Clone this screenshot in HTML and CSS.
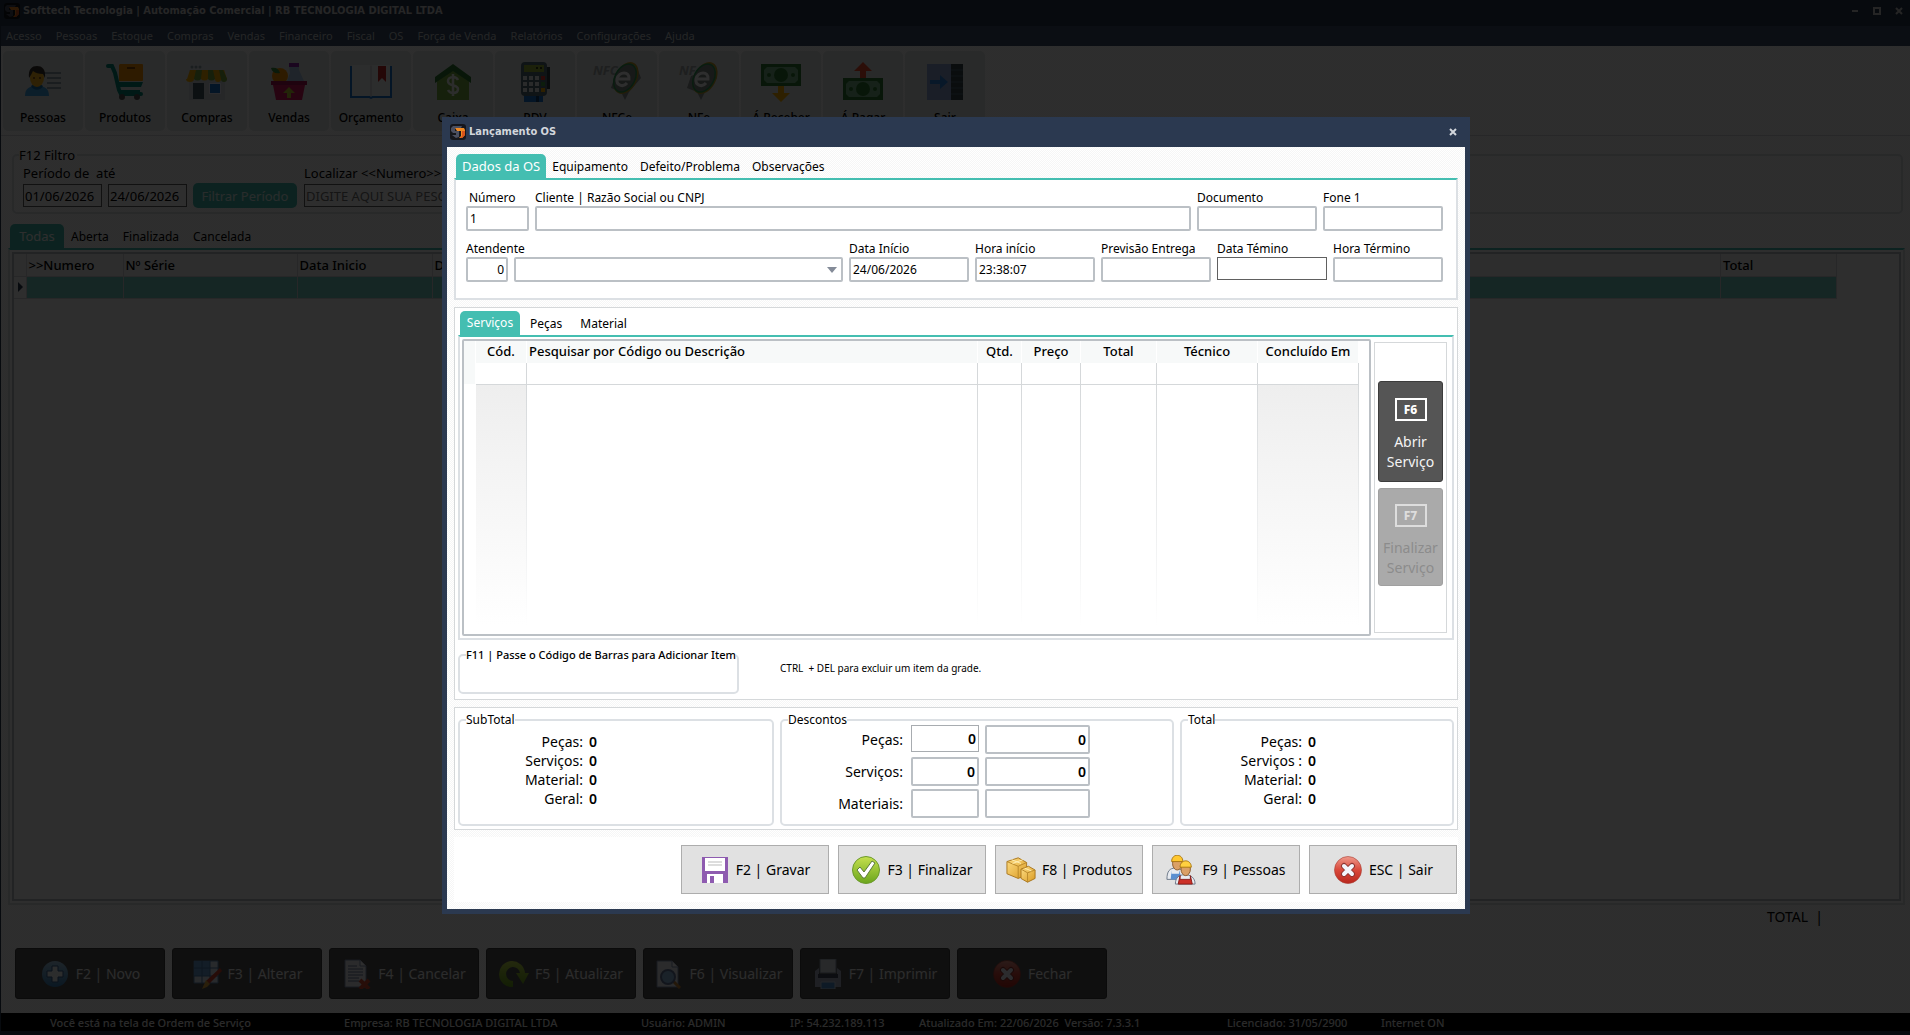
FILE: index.html
```html
<!DOCTYPE html>
<html lang="pt-BR">
<head>
<meta charset="UTF-8">
<meta name="viewport" content="width=device-width, initial-scale=1.0">
<title>Softtech Tecnologia | Automação Comercial</title>
<link rel="stylesheet" href="styles.css">
</head>
<body>
<svg class="defs" width="0" height="0">
    <defs>
        <linearGradient id="gGreen" x1="0" y1="0" x2="0" y2="1"><stop offset="0" stop-color="#c6e04e"/><stop offset="1" stop-color="#6aa51c"/></linearGradient>
        <linearGradient id="gRed" x1="0" y1="0" x2="0" y2="1"><stop offset="0" stop-color="#ef9a8c"/><stop offset="0.5" stop-color="#d9483a"/><stop offset="1" stop-color="#b8261c"/></linearGradient>
        <linearGradient id="gBlue" x1="0" y1="0" x2="0" y2="1"><stop offset="0" stop-color="#a4cbe6"/><stop offset="1" stop-color="#3c84bd"/></linearGradient>
        <linearGradient id="gGold" x1="0" y1="0" x2="1" y2="1"><stop offset="0" stop-color="#ffdf86"/><stop offset="1" stop-color="#d99a22"/></linearGradient>
        <symbol id="logo" viewBox="0 0 16 16">
            <rect width="16" height="16" rx="3" fill="#15161c"/>
            <path d="M3 2h9l-1 2H5v3h4v6l-3 1-4-3h4V9H3L1 7V4z" fill="#4b4f60"/>
            <path d="M5 4h9l1 2v5l-3 3h-3l2-2V7H7z" fill="#f08a24"/>
            <path d="M12 7h3v4l-3 3h-2l2-2z" fill="#d8541c"/>
        </symbol>
        <symbol id="close" viewBox="0 0 30 30">
            <circle cx="15" cy="15" r="13.500" fill="url(#gRed)" stroke="#a83a30" stroke-width="0.6"/>
            <path d="M11 11l8 8M19 11l-8 8" stroke="#8d3431" stroke-width="6" stroke-linecap="round"/>
            <path d="M11 11l8 8M19 11l-8 8" stroke="#f3f5fb" stroke-width="4" stroke-linecap="round"/>
        </symbol>
    </defs>
</svg>

<div class="app">
    <header class="titlebar">
        <svg class="logo"><use href="#logo"/></svg>
        <h1>Softtech Tecnologia | Automação Comercial | RB TECNOLOGIA DIGITAL LTDA</h1>
        <div class="winbuttons">
            <button aria-label="Minimizar"><svg viewBox="0 0 8 8"><path d="M1 4h6" stroke="#ccc" stroke-width="2"/></svg></button>
            <button aria-label="Maximizar"><svg viewBox="0 0 8 8"><path d="M1 1h6v6h-6z" fill="none" stroke="#ccc" stroke-width="2"/></svg></button>
            <button aria-label="Fechar janela"><svg viewBox="0 0 8 8"><path d="M1 1l6 6M7 1l-6 6" stroke="#ccc" stroke-width="2"/></svg></button>
        </div>
    </header>
    <nav class="menu">
        <a href="#">Acesso</a><a href="#">Pessoas</a><a href="#">Estoque</a><a href="#">Compras</a><a href="#">Vendas</a><a href="#">Financeiro</a><a href="#">Fiscal</a><a href="#">OS</a><a href="#">Força de Venda</a><a href="#">Relatórios</a><a href="#">Configurações</a><a href="#">Ajuda</a>
    </nav>

    <div class="toolbar">
        <button class="tool">
            <svg viewBox="0 0 40 40"><path d="M20 11h18M24 16h14M24 21h14M24 26h14" stroke="#78859a" stroke-width="1.500"/><path d="M2 34c0-8 5-10 12-10s12 2 12 10z" fill="#3fa4e8"/><path d="M8 24c2 5 10 5 12 0l-3-2h-6z" fill="#1976b2"/><ellipse cx="14" cy="16" rx="7" ry="9" fill="#ffb81c"/><path d="M6 16c-1-9 3-12 8-12s9 3 8 12l-2-4c-4 0-8-1-10-3-1 2-2 4-4 7z" fill="#3a3330"/><circle cx="11" cy="16" r="1" fill="#704214"/><circle cx="17" cy="16" r="1" fill="#704214"/></svg>
            Pessoas
        </button>
        <button class="tool">
            <svg viewBox="0 0 40 40"><path d="M15 2h22a1 1 0 0 1 1 1v15a1 1 0 0 1-1 1H14V3z" fill="#ff9800"/><path d="M22 5h8v2h-8z" fill="#8a4b00"/><path d="M3 4h4l3 7 4 17 2 4h20" fill="none" stroke="#00897b" stroke-width="4" stroke-linecap="round"/><path d="M13 20h25l-2 5H14zM15 28h20v2H16z" fill="#00897b"/><circle cx="17" cy="35" r="3" fill="#555"/><circle cx="32" cy="35" r="3" fill="#555"/></svg>
            Produtos
        </button>
        <button class="tool">
            <svg viewBox="0 0 40 40"><path d="M2 2h36v36H2z" fill="#cfd8dc"/><path d="M2 2h36v6H2z" fill="#e4e9ec"/><circle cx="5" cy="5" r="1.500" fill="#90a4ae"/><circle cx="9" cy="5" r="1.500" fill="#90a4ae"/><circle cx="13" cy="5" r="1.500" fill="#90a4ae"/><path d="M3 8h34l3 9H0z" fill="#ffb300"/><path d="M9 8h6l-1 9H7zM21 8h5l2 9h-7zM32 8h4l4 9h-6z" fill="#7aa93c"/><path d="M-1 17h8a4 3 0 0 1-8 0M14 17h7a4 3 0 0 1-7 0M28 17h6a3 3 0 0 1-6 0" fill="#ffb300"/><path d="M7 17h7a4 3 0 0 1-7 0M21 17h7a4 3 0 0 1-7 0M34 17h6a3 3 0 0 1-6 0" fill="#7aa93c"/><path d="M6 21h11v16H6z" fill="#455a64"/><path d="M22 21h12v11H22z" fill="#eef"/><path d="M23 22h10v9H23z" fill="#1976d2"/></svg>
            Compras
        </button>
        <button class="tool">
            <svg viewBox="0 0 40 40"><circle cx="11" cy="14" r="8" fill="#ff9800"/><path d="M2 6c5-1 8 1 9 5-5 1-8-1-9-5z" fill="#388e3c"/><path d="M20 3h10v5l5 11H18l3-8z" fill="#a9c6e8"/><path d="M20 1h10v4H20z" fill="#8e24aa"/><path d="M4 23h32l-3 15H7z" fill="#d81b60"/><path d="M2 19h36v4H2z" fill="#ad1457"/><path d="M20 25l6 6h-4v5h-4v-5h-4z" fill="#c0ca33"/></svg>
            Vendas
        </button>
        <button class="tool">
            <svg class="wide" viewBox="0 0 44 40"><path d="M1 4h42v32H24l-2 1-2-1H1z" fill="#1976d2"/><path d="M3 3h18l1 1 1-1h18v31H23l-1 1-1-1H3z" fill="#f4f6f8"/><path d="M22 4v30" stroke="#c0c8cc"/><path d="M29 4h8v16l-4-4-4 4z" fill="#c62828"/></svg>
            Orçamento
        </button>
        <button class="tool">
            <svg viewBox="0 0 40 40"><path d="M4 16L20 5l16 11v22H4z" fill="#7cb342"/><path d="M20 2L38 15v6L20 9 2 21v-6z" fill="#2e7d32"/><path d="M25 18c-1-2-3-3-5-3-3 0-5 2-5 4 0 6 10 3 10 8 0 3-2 4-5 4-2 0-4-1-5-3M20 12v22" fill="none" stroke="#f4f6f0" stroke-width="2.500"/></svg>
            Caixa
        </button>
        <button class="tool">
            <svg viewBox="0 0 40 40"><path d="M31 5h4v22h-4z" fill="#2c3e46"/><path d="M9 31h19v9H9z" fill="#1976d2"/><path d="M21 33h3v7h-3z" fill="#0d3c70"/><rect x="6" width="26" height="34" rx="4" fill="#546e7a"/><path d="M9 3h20v7H9z" fill="#9ab83a"/><path d="M21 5h2v2h-2zM25 5h2v2h-2z" fill="#33401a"/><path d="M8 14h4v4H8zM14 14h4v4h-4zM20 14h4v4h-4zM8 20h4v4H8zM14 20h4v4h-4zM20 20h4v4h-4zM8 26h4v4H8zM14 26h4v4h-4zM20 26h4v4h-4z" fill="#e8ecee"/><path d="M26 14h4v4h-4z" fill="#e53935"/><path d="M26 20h4v4h-4z" fill="#43a047"/><path d="M26 26h4v4h-4z" fill="#ffb300"/></svg>
            PDV
        </button>
        <button class="tool">
            <svg class="wide" viewBox="0 0 44 40"><path d="M20 14l22-8 4 10-12 14-4 8-4-8-10-4z" fill="#8f9595"/><text x="-2" y="13" class="nf">NFC</text><ellipse cx="31" cy="16" rx="10" ry="16" transform="rotate(28 31 16)" fill="none" stroke="#c9a227" stroke-width="2"/><ellipse cx="30" cy="16" rx="10" ry="15" transform="rotate(28 30 16)" fill="#7f8a84" stroke="#2f9e5a" stroke-width="1.500"/><path d="M22 17h12c1-8-10-8-12 0-1 6 6 9 10 4" fill="none" stroke="#fff" stroke-width="3"/></svg>
            NFCe
        </button>
        <button class="tool">
            <svg class="wide" viewBox="0 0 44 40"><path d="M14 14l22-8 4 10-12 14-4 8-4-8-10-4z" fill="#8f9595"/><text x="2" y="13" class="nf">NF</text><ellipse cx="28" cy="16" rx="10" ry="16" transform="rotate(28 28 16)" fill="none" stroke="#c9a227" stroke-width="2"/><ellipse cx="27" cy="16" rx="10" ry="15" transform="rotate(28 27 16)" fill="#7f8a84" stroke="#2f9e5a" stroke-width="1.500"/><path d="M19 17h12c1-8-10-8-12 0-1 6 6 9 10 4" fill="none" stroke="#fff" stroke-width="3"/></svg>
            NFe
        </button>
        <button class="tool">
            <svg viewBox="0 0 40 40"><path d="M0 2h40v22H0z" fill="#2e7d32"/><path d="M6 5h28l3 3v10l-3 3H6l-3-3V8z" fill="#7cb98a"/><circle cx="20" cy="13" r="7" fill="#2e7d32"/><circle cx="8" cy="13" r="2" fill="#2e7d32"/><circle cx="32" cy="13" r="2" fill="#2e7d32"/><path d="M17 24h6v7h6l-9 9-9-9h6z" fill="#ffb300"/></svg>
            Á Receber
        </button>
        <button class="tool">
            <svg viewBox="0 0 40 40"><path d="M0 16h40v22H0z" fill="#2e7d32"/><path d="M6 19h28l3 3v10l-3 3H6l-3-3V22z" fill="#7cb98a"/><circle cx="20" cy="27" r="7" fill="#2e7d32"/><circle cx="8" cy="27" r="2" fill="#2e7d32"/><circle cx="32" cy="27" r="2" fill="#2e7d32"/><path d="M17 16h6V9h6l-9-9-9 9h6z" fill="#f4512c"/></svg>
            Á Pagar
        </button>
        <button class="tool">
            <svg viewBox="0 0 40 40"><path d="M2 2h24v36H2z" fill="#90a8d8"/><path d="M26 2h12v36H26z" fill="#37474f"/><path d="M26 8h12M26 14h12M26 20h12M26 26h12M26 32h12" stroke="#546e7a"/><path d="M5 18h10v-5l8 7-8 7v-5H5z" fill="#2f86e0"/></svg>
            Sair
        </button>
    </div>

    <main class="main">
        <fieldset class="filter">
            <legend>F12 Filtro</legend>
            <div class="period">
                <label for="dtIni">Período de&nbsp; até</label>
                <div class="period-row">
                    <input id="dtIni" value="01/06/2026">
                    <input aria-label="Data final" value="24/06/2026">
                    <button class="btn-filter">Filtrar Período</button>
                </div>
            </div>
            <div class="search">
                <label for="search">Localizar &lt;&lt;Numero&gt;&gt;</label>
                <input id="search" placeholder="DIGITE AQUI SUA PESQUISA">
            </div>
        </fieldset>

        <div class="tabs tabs-main">
            <button class="tab active">Todas</button>
            <button class="tab">Aberta</button>
            <button class="tab">Finalizada</button>
            <button class="tab">Cancelada</button>
        </div>
        <div class="list-panel">
            <div class="list-box">
                <table class="list">
                    <colgroup><col class="w-mark"><col class="w-num"><col class="w-serie"><col class="w-date"><col><col class="w-sum"></colgroup>
                    <thead>
                        <tr><th></th><th>&gt;&gt;Numero</th><th>Nº Série</th><th>Data Inicio</th><th>Data Término</th><th>Total</th></tr>
                    </thead>
                    <tbody>
                        <tr><td class="mark"></td><td></td><td></td><td></td><td></td><td></td></tr>
                    </tbody>
                </table>
            </div>
        </div>
        <div class="total-line">TOTAL&nbsp; |</div>
        <div class="actions">
            <button class="action"><svg viewBox="0 0 30 30"><circle cx="15" cy="15" r="13" fill="url(#gBlue)"/><path d="M12 7h6v5h5v6h-5v5h-6v-5H7v-6h5z" fill="#f4f6fa" stroke="#3a6090"/></svg>F2 | Novo</button>
            <button class="action"><svg viewBox="0 0 30 30"><path d="M2 2h24v22H2z" fill="#dfe9f2" stroke="#5c86b4"/><path d="M2 2h16v15H2z" fill="#6ba3d6"/><path d="M2 9h24M2 17h24M10 2v22M18 2v22" stroke="#4c79ab"/><path d="M28 9l2 3-13 13-3-3z" fill="#d8432e"/><path d="M14 21l4 4-3 3-5 2z" fill="#eaa93c"/></svg>F3 | Alterar</button>
            <button class="action"><svg viewBox="0 0 30 30"><path d="M3 1h15l6 6v21H3z" fill="#eceff4" stroke="#8490b0"/><path d="M18 1v6h6" fill="#fff" stroke="#8490b0"/><path d="M6 7h9M6 10h15M6 13h15M6 16h15M6 19h11M6 22h11" stroke="#6b7899"/><path d="M18 21l9 9M27 21l-9 9" stroke="#d9482c" stroke-width="4"/></svg>F4 | Cancelar</button>
            <button class="action"><svg viewBox="0 0 30 30"><path d="M14 28a13 13 0 1 1 12-14h4l-6 11-7-11h4a7 7 0 1 0-7 8z" fill="url(#gGreen)"/></svg>F5 | Atualizar</button>
            <button class="action"><svg viewBox="0 0 30 30"><path d="M3 2h15l6 6v20H3z" fill="#eceff4" stroke="#8490b0"/><path d="M18 2v6h6" fill="#fff" stroke="#8490b0"/><path d="M19 22l7 7" stroke="#c98335" stroke-width="3"/><circle cx="14" cy="18" r="7" fill="#8fbbe4" stroke="#66779b" stroke-width="2"/></svg>F6 | Visualizar</button>
            <button class="action"><svg viewBox="0 0 30 30"><path d="M7 0h16v14H7z" fill="#dce0e6" stroke="#8a93a6"/><path d="M2 12l4-3v7h18V9l4 3v16H2z" fill="#a9b2c8"/><path d="M5 15h20v4H5z" fill="#424b60"/><path d="M8 23h14v7H8z" fill="#4f93cf" stroke="#c7d3e2"/></svg>F7 | Imprimir</button>
            <button class="action"><svg viewBox="0 0 30 30"><use href="#close"/></svg>Fechar</button>
        </div>
    </main>

    <footer class="status">
        <span class="s1">Você está na tela de Ordem de Serviço</span>
        <span class="s2">Empresa: RB TECNOLOGIA DIGITAL LTDA</span>
        <span class="s3">Usuário: ADMIN</span>
        <span class="s4">IP: 54.232.189.113</span>
        <span class="s5">Atualizado Em: 22/06/2026&nbsp; Versão: 7.3.3.1</span>
        <span class="s6">Licenciado: 31/05/2900</span>
        <span>Internet ON</span>
    </footer>
</div>

<div class="overlay">
    <div class="dialog" role="dialog" aria-labelledby="dlgTitle">
        <div class="dialog-title">
            <svg class="logo"><use href="#logo"/></svg>
            <h2 id="dlgTitle">Lançamento OS</h2>
            <button class="dialog-close" aria-label="Fechar"><svg viewBox="0 0 8 8"><path d="M1 1l6 6M7 1l-6 6" stroke="#d2d6dc" stroke-width="2"/></svg></button>
        </div>
        <div class="dialog-body">
            <div class="tabs">
                <button class="tab active">Dados da OS</button>
                <button class="tab">Equipamento</button>
                <button class="tab">Defeito/Problema</button>
                <button class="tab">Observações</button>
            </div>
            <div class="os-data">
                <div class="field-row">
                    <div class="field f-num"><label class="indent" for="numero">Número</label><input id="numero" value="1"></div>
                    <div class="field grow"><label for="cliente">Cliente | Razão Social ou CNPJ</label><input id="cliente"></div>
                    <div class="field f-md"><label for="doc">Documento</label><input id="doc"></div>
                    <div class="field f-md"><label for="fone">Fone 1</label><input id="fone"></div>
                </div>
                <div class="field-row">
                    <div class="field grow">
                        <label for="atend">Atendente</label>
                        <div class="pair">
                            <input id="atend" class="code" value="0">
                            <div class="select-box"><select aria-label="Nome do atendente"><option></option></select></div>
                        </div>
                    </div>
                    <div class="field f-md"><label for="dataIni">Data Início</label><input id="dataIni" value="24/06/2026"></div>
                    <div class="field f-md"><label for="horaIni">Hora início</label><input id="horaIni" value="23:38:07"></div>
                    <div class="field f-sm"><label for="prev">Previsão Entrega</label><input id="prev"></div>
                    <div class="field f-sm"><label for="dataFim">Data Témino</label><input id="dataFim" class="thin"></div>
                    <div class="field f-sm"><label for="horaFim">Hora Término</label><input id="horaFim"></div>
                </div>
            </div>

            <div class="items">
                <div class="tabs tabs-items">
                    <button class="tab active">Serviços</button>
                    <button class="tab">Peças</button>
                    <button class="tab">Material</button>
                </div>
                <div class="items-panel">
                    <div class="grid-box">
                        <table class="grid">
                            <colgroup><col class="c-mark"><col class="c-cod"><col><col class="c-qtd"><col class="c-preco"><col class="c-total"><col class="c-tec"><col class="c-fim"></colgroup>
                            <thead>
                                <tr><th></th><th>Cód.</th><th class="left">Pesquisar por Código ou Descrição</th><th>Qtd.</th><th>Preço</th><th>Total</th><th>Técnico</th><th>Concluído Em</th></tr>
                            </thead>
                            <tbody>
                                <tr class="line"><td></td><td></td><td></td><td></td><td></td><td></td><td></td><td></td></tr>
                                <tr class="fade"><td></td><td class="locked"></td><td></td><td></td><td></td><td></td><td></td><td class="locked"></td></tr>
                            </tbody>
                        </table>
                    </div>
                    <div class="side">
                        <button class="side-btn"><span class="key">F6</span>Abrir Serviço</button>
                        <button class="side-btn" disabled><span class="key">F7</span>Finalizar Serviço</button>
                    </div>
                </div>
                <div class="barcode-row">
                    <fieldset class="barcode">
                        <legend><label for="barcode">F11 | Passe o Código de Barras para Adicionar Item</label></legend>
                        <input id="barcode">
                    </fieldset>
                    <p>CTRL&nbsp; + DEL para excluir um item da grade.</p>
                </div>
            </div>

            <div class="sums">
                <fieldset class="subtotal">
                    <legend>SubTotal</legend>
                    <dl>
                        <dt>Peças:</dt><dd>0</dd>
                        <dt>Serviços:</dt><dd>0</dd>
                        <dt>Material:</dt><dd>0</dd>
                        <dt>Geral:</dt><dd>0</dd>
                    </dl>
                </fieldset>
                <fieldset class="discounts">
                    <legend>Descontos</legend>
                    <div class="disc-grid">
                        <label for="d1">Peças:</label><input id="d1" class="thin" value="0"><input aria-label="Peças valor" value="0">
                        <label for="d2">Serviços:</label><input id="d2" value="0"><input aria-label="Serviços valor" value="0">
                        <label for="d3">Materiais:</label><input id="d3"><input aria-label="Materiais valor">
                    </div>
                </fieldset>
                <fieldset class="total">
                    <legend>Total</legend>
                    <dl>
                        <dt>Peças:</dt><dd>0</dd>
                        <dt>Serviços :</dt><dd>0</dd>
                        <dt>Material:</dt><dd>0</dd>
                        <dt>Geral:</dt><dd>0</dd>
                    </dl>
                </fieldset>
            </div>

            <div class="buttons">
                <button><svg viewBox="0 0 30 30"><path d="M2 2h26v26H2z" fill="#8e5bb0"/><path d="M5 3h20v13H5z" fill="#fff"/><path d="M8 7h14M8 10h14" stroke="#bbb"/><path d="M7 19h16v9H7z" fill="#fff"/><path d="M10 21h4v7h-4z" fill="#8e5bb0"/></svg>F2 | Gravar</button>
                <button><svg viewBox="0 0 30 30"><circle cx="15" cy="15" r="13.500" fill="url(#gGreen)" stroke="#6c9a2c"/><path d="M6 15l3-3 4 5 8-11 3 2-10 15h-2z" fill="#fff" stroke="#5b7a3a"/></svg>F3 | Finalizar</button>
                <button><svg viewBox="0 0 32 30"><path d="M1 6l12-4 9 5v13l-9 4-12-5z" fill="url(#gGold)" stroke="#a8741c"/><path d="M1 6l12 5 9-4M13 11v13" fill="none" stroke="#b8862a"/><path d="M6 4l10 4M18 4L7 8" stroke="#fff0b8" fill="none"/><path d="M16 14l8-3 7 4v9l-8 4-7-4z" fill="url(#gGold)" stroke="#a8741c"/><path d="M16 14l7 4 8-3M23 18v10" fill="none" stroke="#b8862a"/><path d="M20 13l7 3" stroke="#fff0b8" fill="none"/></svg>F8 | Produtos</button>
                <button><svg viewBox="0 0 32 32"><path d="M1 26c0-9 3-12 9-12s9 3 9 12z" fill="#e8ebf0" stroke="#6b7688"/><path d="M6 16v4h8v-4l3 10H5z" fill="#5b8fd0"/><ellipse cx="12" cy="9" rx="5" ry="7" fill="#dba066" stroke="#8b5a2b"/><path d="M6 7c0-9 12-9 12 0z" fill="#ffc830" stroke="#a87410"/><path d="M10 31c0-7 4-10 10-10s11 3 11 10z" fill="#e8ebf0" stroke="#6b7688"/><path d="M15 22v4h11v-4l2 9H13z" fill="#cc3028" stroke="#8c1c18"/><ellipse cx="21" cy="15" rx="5" ry="7" fill="#dba066" stroke="#8b5a2b"/><path d="M15 13c0-9 12-9 12 0z" fill="#ffd040" stroke="#a87410"/></svg>F9 | Pessoas</button>
                <button><svg viewBox="0 0 30 30"><use href="#close"/></svg>ESC | Sair</button>
            </div>
        </div>
    </div>
</div>
</body>
</html>
```
FILE: styles.css
```css
* {
    box-sizing: border-box;
}

body {
    margin: 0;
    font-family: "Noto Sans", "Open Sans", sans-serif;
    font-size: 12px;
    line-height: 16px;
    color: #000;
}

button, input, select {
    font: inherit;
    color: inherit;
    margin: 0;
}

button {
    padding: 0;
    border: none;
    background: none;
    cursor: pointer;
}

h1, h2, p, dl, dd {
    margin: 0;
}

fieldset {
    margin: 0;
    min-width: 0;
    border: 2px solid #dce0e4;
    border-radius: 5px;
}

legend {
    padding: 0;
}

.defs {
    position: absolute;
}

.logo {
    width: 16px;
    height: 16px;
}

/* janela principal */
.app {
    display: flex;
    flex-direction: column;
    min-height: 100vh;
    border-left: 1px solid #2b3950;
    border-bottom: 4px solid #2b3950;
    background: conic-gradient(#f7f7f7 25%, #fff 0 50%, #f7f7f7 0 75%, #fff 0) 0 0 / 2px 2px;
}

.titlebar {
    display: flex;
    align-items: center;
    gap: 3px;
    height: 26px;
    padding: 0 7px 4px 3px;
    background: #2b3950;
    color: #d0d0d0;
}

.titlebar h1, .dialog-title h2 {
    font-family: "DejaVu Sans Condensed", "Noto Sans", sans-serif;
    font-size: 11px;
    font-weight: 700;
}

.winbuttons {
    display: flex;
    gap: 14px;
    margin-left: auto;
}

.winbuttons svg, .dialog-close svg {
    display: block;
    width: 8px;
    height: 8px;
}

.menu {
    display: flex;
    gap: 14px;
    height: 20px;
    padding: 2px 5px;
    background: #3c5068;
    font-size: 11px;
}

.menu a {
    color: #c8ccd0;
    text-decoration: none;
}

.toolbar {
    display: flex;
    gap: 2px;
    padding: 5px 2px 4px;
    border-bottom: 1px solid #d5d8da;
}

.tool {
    display: flex;
    flex-direction: column;
    align-items: center;
    justify-content: space-between;
    width: 80px;
    height: 80px;
    padding: 11px 0 5px;
    border-radius: 5px;
    background: #e2e8e6;
    font-weight: 500;
}

.tool svg {
    width: 40px;
    height: 40px;
    overflow: visible;
}

.tool svg.wide {
    width: 44px;
}

.nf {
    fill: #a5aaad;
    font: italic 700 13px "Noto Sans", sans-serif;
}

.main {
    display: flex;
    flex-direction: column;
    flex: 1;
    padding: 11px 5px 14px 7px;
}

.filter {
    display: flex;
    gap: 7px;
    margin: 0 2px 0 4px;
    height: 67px;
    padding: 2px 8px 0 9px;
    font-size: 13px;
}

.filter legend {
    margin-left: -4px;
    padding-right: 2px;
}

.filter label {
    display: block;
    margin-bottom: 3px;
}

.filter input {
    height: 23px;
    padding: 0 1px;
    border: 1px solid #606060;
    background: #fff;
}

.period-row {
    display: flex;
    gap: 6px;
}

.period input {
    width: 79px;
}

.btn-filter {
    width: 104px;
    height: 25px;
    margin-top: -1px;
    border-radius: 5px;
    background: #44beb1;
    color: #e0f4f2;
}

.search {
    flex: 1;
}

.search input {
    width: 60%;
}

.tabs {
    display: flex;
    height: 24px;
    padding-left: 2px;
}

.tab {
    padding: 2px 6px 0;
}

.tab.active {
    padding: 0 6px;
    border-radius: 5px 5px 0 0;
    background: #44beb1;
    color: #fff;
    font-size: 13px;
}

.tabs-main {
    margin-top: 10px;
}

.tabs-main .tab {
    padding: 2px 7px 0;
}

.tabs-main .tab.active {
    width: 54px;
    padding: 0;
}

.list-panel {
    flex: 1;
    display: flex;
    padding: 2px;
    border: 2px solid #dce0e4;
    border-top-color: #44beb1;
    background: #fff;
}

.list-box {
    flex: 1;
    border: 2px solid #bbc0c5;
    background: #fff;
}

.list {
    width: calc(100% - 62px);
    table-layout: fixed;
    border-collapse: collapse;
}

.list th, .list td {
    height: 22px;
    padding: 0 2px;
    border-right: 1px solid #d5d8da;
    border-bottom: 1px solid #d5d8da;
    text-align: left;
    font-weight: 500;
}

.list th {
    background: #f7f9f9;
    font-size: 13px;
}

.list td {
    background: #74d4c9;
}

.list .mark {
    background: #fff;
}

.mark::before {
    content: "";
    display: block;
    margin-left: 2px;
    border-left: 5px solid #2b3950;
    border-top: 5px solid transparent;
    border-bottom: 5px solid transparent;
}

.w-mark { width: 12px; }
.w-num { width: 97px; }
.w-serie { width: 174px; }
.w-date { width: 135px; }
.w-sum { width: 116px; }

.total-line {
    height: 43px;
    padding: 3px 82px 0 0;
    text-align: right;
    font-size: 14px;
    line-height: 18px;
}

.actions {
    display: flex;
    gap: 7px;
    margin-left: 7px;
}

.action {
    display: flex;
    align-items: center;
    justify-content: center;
    gap: 6px;
    width: 150px;
    height: 51px;
    border: 1px solid #3c3c3c;
    border-radius: 3px;
    background: #555;
    color: #f0f0f0;
    font-size: 14px;
}

.action svg {
    width: 30px;
    height: 30px;
}

.status {
    display: flex;
    height: 18px;
    padding-left: 49px;
    background: #000;
    color: #e8e8e8;
    font-size: 11px;
    line-height: 20px;
    font-weight: 500;
    white-space: nowrap;
}

.s1 { width: 294px; }
.s2 { width: 297px; }
.s3 { width: 149px; }
.s4 { width: 129px; }
.s5 { width: 308px; }
.s6 { width: 154px; }

/* dialogo de lançamento */
.overlay {
    position: fixed;
    inset: 0;
    display: flex;
    align-items: center;
    justify-content: center;
    padding: 0 0 4px 2px;
    background: rgba(0, 0, 0, 0.82);
}

.dialog {
    width: 1028px;
    max-width: 100%;
    border: 5px solid #2b3950;
    border-top: none;
    background: #2b3950;
}

.dialog-title {
    display: flex;
    align-items: center;
    gap: 3px;
    height: 30px;
    padding: 0 8px 0 3px;
    color: #d2d6dc;
}

.dialog-close {
    margin-left: auto;
}

.dialog-body {
    display: flex;
    flex-direction: column;
    padding: 7px;
    background: conic-gradient(#f6f6f6 25%, #fff 0 50%, #f6f6f6 0 75%, #fff 0) 0 0 / 2px 2px;
}

.dialog input, .dialog select {
    width: 100%;
    height: 25px;
    padding: 0 2px;
    border: 2px solid #bbc0c5;
    border-radius: 2px;
    background: #fff;
}

.os-data {
    display: flex;
    flex-direction: column;
    gap: 10px;
    padding: 10px 13px 16px 10px;
    border: 2px solid #dce0e4;
    border-top-color: #44beb1;
    background: #fff;
}

.field-row, .pair {
    display: flex;
    gap: 6px;
}

.field label {
    display: block;
    height: 16px;
    white-space: nowrap;
}

.field label.indent {
    padding-left: 3px;
}

.grow {
    flex: 1;
}

.f-num { width: 63px; }
.f-md { width: 120px; }
.f-sm { width: 110px; }

.dialog .code {
    width: 42px;
    text-align: right;
}

.dialog .thin {
    border: 1px solid #606060;
    border-radius: 0;
}

.dialog .field .thin {
    height: 23px;
}

.select-box {
    position: relative;
    flex: 1;
}

.select-box select {
    appearance: none;
}

.select-box::after {
    content: "";
    position: absolute;
    right: 6px;
    top: 10px;
    border-top: 6px solid #848b98;
    border-left: 5px solid transparent;
    border-right: 5px solid transparent;
}

.items, .sums {
    margin-top: 7px;
    border: 1px solid #d5d8da;
    background: #fff;
}

.items {
    padding: 3px 3px 5px;
}

.tabs-items .tab {
    padding: 2px 8px 0 10px;
}

.tabs-items .tab.active {
    width: 60px;
    padding: 0;
    font-size: 12px;
}

.items-panel {
    display: flex;
    gap: 3px;
    padding: 2px 5px 2px 2px;
    border: 2px solid #dce0e4;
    border-top-color: #44beb1;
}

.grid-box {
    flex: 1;
    height: 297px;
    padding-right: 10px;
    border: 2px solid #bbc0c5;
    border-radius: 2px;
}

.grid {
    width: 100%;
    table-layout: fixed;
    border-collapse: separate;
    border-spacing: 0;
}

.grid th {
    height: 22px;
    padding: 0 0 2px;
    border-right: 1px solid #fff;
    background: #f7f9f9;
    font-size: 13px;
    font-weight: 500;
    white-space: nowrap;
}

.grid th.left {
    padding-left: 2px;
    text-align: left;
}

.grid td {
    padding: 0;
    border-right: 1px solid #d5d8da;
}

.line td {
    height: 22px;
    border-bottom: 1px solid #d5d8da;
}

.grid td:first-child {
    border-color: #fff;
}

.line td:first-child {
    background: #f7f9f9;
}

.fade td {
    height: 240px;
    border-right: 1px solid;
    border-image: linear-gradient(#d5d8da, #fff) 1;
}

.fade td:first-child {
    border-image: none;
    border-color: #fff;
}

.fade .locked {
    background: linear-gradient(#eee, #fff);
}

.c-mark { width: 12px; }
.c-cod { width: 51px; }
.c-qtd { width: 44px; }
.c-preco { width: 59px; }
.c-total { width: 76px; }
.c-tec { width: 101px; }
.c-fim { width: 101px; }

.side {
    display: flex;
    flex-direction: column;
    gap: 6px;
    width: 73px;
    margin: 3px 0;
    padding: 38px 3px 0;
    border: 1px solid #d5d8da;
}

.side-btn {
    display: flex;
    flex-direction: column;
    align-items: center;
    height: 101px;
    padding-top: 16px;
    border: 1px solid #3c3c3c;
    border-radius: 3px;
    background: #555;
    color: #f4f4f4;
    font-size: 14px;
    line-height: 20px;
}

.side-btn:disabled {
    height: 98px;
    padding-top: 15px;
    border-color: #a0a0a0;
    background: #aaa;
    color: #8c8c8c;
}

.key {
    width: 32px;
    height: 23px;
    margin-bottom: 11px;
    border: 2px solid #fff;
    color: #fff;
    font-size: 12px;
    font-weight: 800;
    line-height: 19px;
}

.side-btn:disabled .key {
    border-color: #ddd;
    color: #ddd;
}

.barcode-row {
    display: flex;
    gap: 41px;
    margin-top: 7px;
}

.barcode {
    width: 281px;
    padding: 0 6px;
}

.barcode legend {
    font-size: 11px;
    font-weight: 500;
    white-space: nowrap;
}

.dialog .barcode input {
    display: block;
    height: 29px;
    border: none;
}

.barcode-row p {
    padding-top: 13px;
    font-size: 10px;
}

.sums {
    display: flex;
    gap: 6px;
    height: 123px;
    padding: 4px 3px 3px;
}

.sums legend {
    margin-left: 6px;
}

.sums fieldset {
    padding: 0;
    font-size: 14px;
}

.sums fieldset legend {
    font-size: 12px;
}

.subtotal {
    width: 316px;
}

.discounts {
    flex: 1;
}

.total {
    width: 274px;
}

.sums dl {
    display: grid;
    grid-template-columns: 123px 20px;
    column-gap: 6px;
    padding-top: 4px;
    line-height: 19px;
}

.total dl {
    grid-template-columns: 120px 20px;
}

.sums dt {
    text-align: right;
}

.sums dd {
    font-weight: 600;
}

.disc-grid {
    display: grid;
    grid-template-columns: 123px 68px 105px;
    column-gap: 6px;
    row-gap: 3px;
    align-items: center;
    margin-top: -3px;
}

.disc-grid label {
    padding-right: 2px;
    text-align: right;
}

.dialog .disc-grid input {
    height: 29px;
    text-align: right;
    font-weight: 600;
}

.dialog .disc-grid .thin {
    height: 27px;
    align-self: start;
    border-color: #a8acb0;
}

.buttons {
    display: flex;
    justify-content: flex-end;
    gap: 9px;
    margin-top: 7px;
    padding: 8px 1px;
    background: #fff;
}

.buttons button {
    display: flex;
    align-items: center;
    justify-content: center;
    gap: 6px;
    width: 148px;
    height: 49px;
    border: 1px solid #adadad;
    background: #e1e1e1;
    font-size: 14px;
}

.buttons svg {
    width: 30px;
    height: 30px;
}
```
